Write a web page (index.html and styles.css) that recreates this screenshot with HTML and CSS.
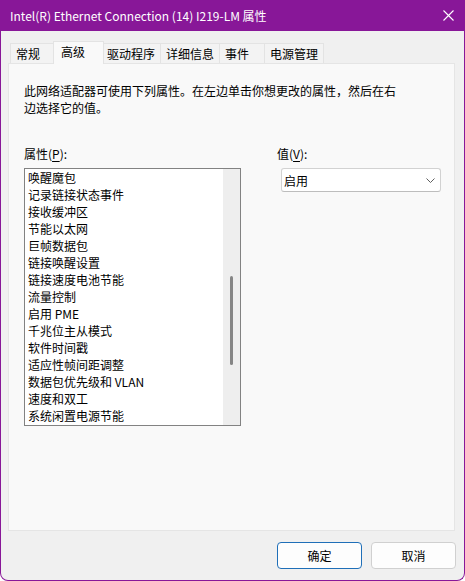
FILE: index.html
```html
<!DOCTYPE html>
<html lang="zh-CN">
<head>
    <meta charset="UTF-8">
    <title>Intel(R) Ethernet Connection (14) I219-LM 属性</title>
    <link rel="stylesheet" href="styles.css">
</head>
<body>
<div class="window">
    <div class="titlebar">
        <span class="title">Intel(R) Ethernet Connection (14) I219-LM 属性</span>
        <span class="close">
            <svg width="11" height="11" viewBox="0 0 11 11"><path d="M0.5 0.5L10.5 10.5M10.5 0.5L0.5 10.5" stroke="#fff" stroke-width="1.1"/></svg>
        </span>
    </div>
    <div class="content">
        <div class="tabs">
            <div class="tab">常规</div>
            <div class="tab active">高级</div>
            <div class="tab">驱动程序</div>
            <div class="tab">详细信息</div>
            <div class="tab">事件</div>
            <div class="tab">电源管理</div>
        </div>
        <div class="panel">
            <p class="desc">此网络适配器可使用下列属性。在左边单击你想更改的属性，然后在右<br>边选择它的值。</p>
            <div class="fields">
                <div class="field-left">
                    <div class="label">属性(<u>P</u>):</div>
                    <div class="listbox">
                        <ul class="items">
                            <li>唤醒魔包</li>
                            <li>记录链接状态事件</li>
                            <li>接收缓冲区</li>
                            <li>节能以太网</li>
                            <li>巨帧数据包</li>
                            <li>链接唤醒设置</li>
                            <li>链接速度电池节能</li>
                            <li>流量控制</li>
                            <li>启用 PME</li>
                            <li>千兆位主从模式</li>
                            <li>软件时间戳</li>
                            <li>适应性帧间距调整</li>
                            <li>数据包优先级和 VLAN</li>
                            <li>速度和双工</li>
                            <li>系统闲置电源节能</li>
                        </ul>
                        <div class="scrollbar"><div class="thumb"></div></div>
                    </div>
                </div>
                <div class="field-right">
                    <div class="label">值(<u>V</u>):</div>
                    <div class="select">
                        <span>启用</span>
                        <svg width="9" height="5" viewBox="0 0 9 5"><path d="M0.5 0.5L4.5 4.5L8.5 0.5" fill="none" stroke="#5f5f5f" stroke-width="1"/></svg>
                    </div>
                </div>
            </div>
        </div>
        <div class="buttons">
            <button class="btn primary">确定</button>
            <button class="btn">取消</button>
        </div>
    </div>
</div>
</body>
</html>
```

FILE: styles.css
```css
* {
    box-sizing: border-box;
}
html, body {
    margin: 0;
}
body {
    width: 465px;
    height: 581px;
    overflow: hidden;
    background: #fff;
    font-family: "Noto Sans CJK SC", "Noto Sans", sans-serif;
    font-size: 12px;
    color: #000;
}
.window {
    width: 465px;
    height: 581px;
    border: 1px solid #881798;
    border-top: none;
    border-radius: 0 0 8px 8px;
    background: #f0f0f0;
    display: flex;
    flex-direction: column;
    overflow: hidden;
}
.titlebar {
    height: 31px;
    flex: none;
    background: #881798;
    color: #fff;
    display: flex;
    align-items: center;
    justify-content: space-between;
    padding: 0 10px 0 9px;
}
.title {
    line-height: 17px;
}
.close svg {
    display: block;
}
.content {
    flex: 1;
    display: flex;
    flex-direction: column;
    padding: 10px 8px 0 7px;
}

/* tab strip */
.tabs {
    display: flex;
    align-items: flex-end;
    height: 22px;
    padding-left: 2px;
}
.tab {
    height: 20px;
    min-width: 46px;
    padding: 0 5px;
    margin-right: -1px;
    border: 1px solid #e3e3e3;
    border-bottom: none;
    background: #f3f3f3;
    line-height: 19px;
    white-space: nowrap;
}
.tab.active {
    position: relative;
    z-index: 2;
    height: 23px;
    min-width: 51px;
    padding: 0 7px;
    margin: 0 -3px -1px -2px;
    background: #f9f9f9;
    line-height: 19px;
}

/* panel */
.panel {
    width: 447px;
    height: 468px;
    background: #f9f9f9;
    border: 1px solid #e5e5e5;
    padding: 18px 15px 0 15px;
}
.desc {
    margin: 0 0 29px 0;
    line-height: 17px;
}
.fields {
    display: flex;
}
.label {
    height: 17px;
    line-height: 17px;
    margin-bottom: 6px;
}
.label u {
    text-underline-offset: 2px;
}
.listbox {
    width: 217px;
    height: 258px;
    border: 1px solid #828282;
    background: #fff;
    display: flex;
}
.items {
    flex: 1;
    list-style: none;
    margin: 0;
    padding: 0 0 0 3px;
}
.items li {
    height: 17px;
    line-height: 17px;
    white-space: nowrap;
}
.scrollbar {
    width: 17px;
    background: #eeeeee;
}
.thumb {
    width: 3px;
    height: 89px;
    margin: 107px 0 0 7px;
    border-radius: 2px;
    background: #858585;
}
.field-right {
    margin-left: 36px;
}
.select {
    width: 160px;
    height: 24px;
    margin-left: 4px;
    border: 1px solid #d2d2d2;
    border-bottom-color: #bdbdbd;
    border-radius: 3px;
    background: #fff;
    display: flex;
    align-items: center;
    justify-content: space-between;
    padding: 0 5px 0 2px;
}
.select svg {
    display: block;
}

/* dialog buttons */
.buttons {
    display: flex;
    justify-content: flex-end;
    gap: 9px;
    margin-top: 11px;
}
.btn {
    width: 85px;
    height: 27px;
    border: 1px solid #d0d0d0;
    border-radius: 4px;
    background: #fdfdfd;
    font-family: inherit;
    font-size: 12px;
    color: #000;
    padding: 0;
}
.btn.primary {
    border-color: #1f6fb8;
}
```
